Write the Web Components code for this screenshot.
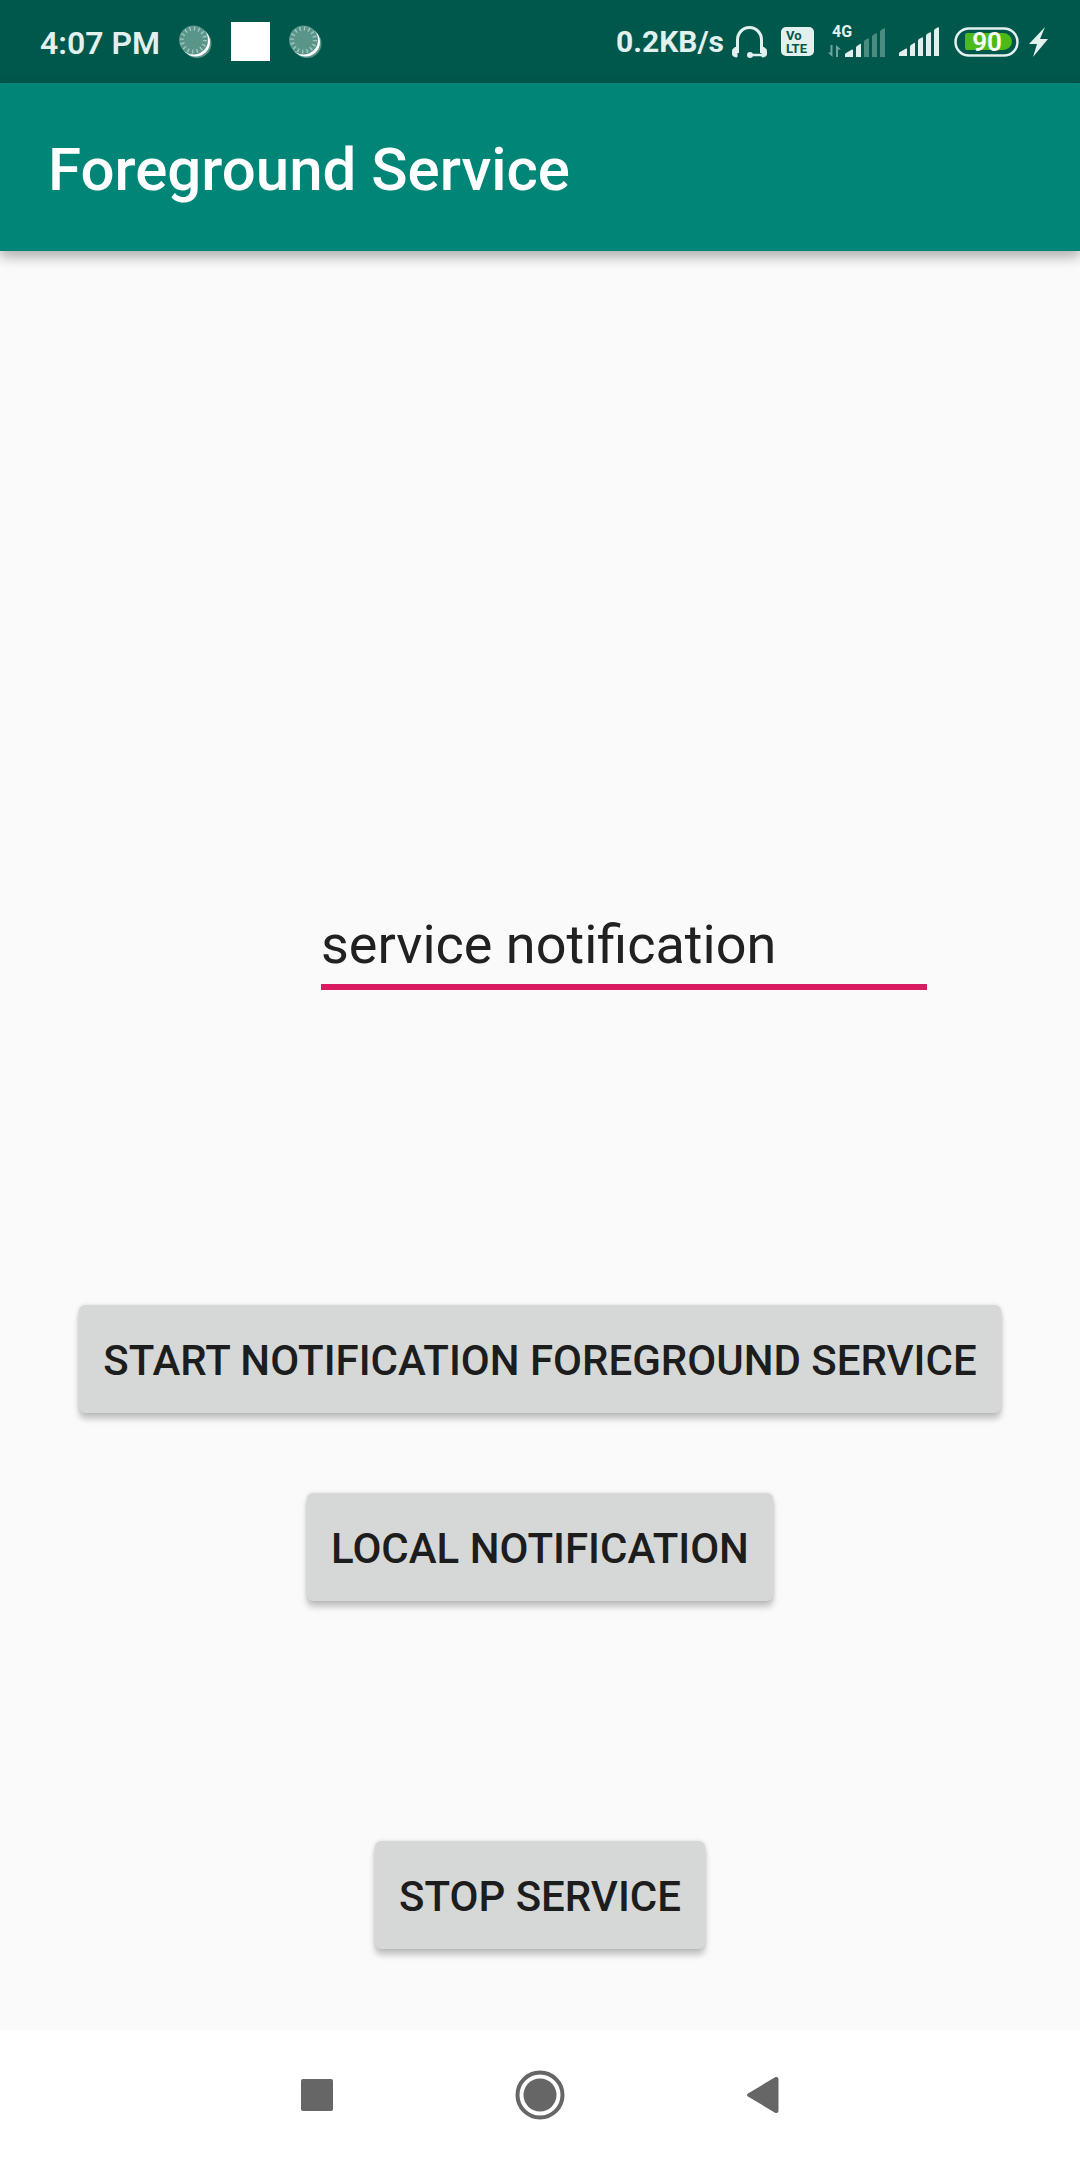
<!DOCTYPE html>
<html lang="en">
<head>
<meta charset="utf-8">
<meta name="viewport" content="width=device-width, initial-scale=1">
<title>Foreground Service</title>
<style>
  body { margin: 0; font-family: Roboto, "Noto Sans", sans-serif; background: #fafafa; }
</style>
</head>
<body>
<phone-screen>
  <status-bar slot="status"></status-bar>
  <app-bar slot="bar">Foreground Service</app-bar>
  <underlined-field label="Notification text" value="service notification"></underlined-field>
  <action-group>
    <action-button>START NOTIFICATION FOREGROUND SERVICE</action-button>
    <action-button>LOCAL NOTIFICATION</action-button>
  </action-group>
  <action-button>STOP SERVICE</action-button>
  <nav-bar slot="nav"></nav-bar>
</phone-screen>

<script>
  const define = (name, html, setup) => {
    const template = document.createElement('template');
    template.innerHTML = html;
    customElements.define(name, class extends HTMLElement {
      constructor() {
        super();
        this.attachShadow({ mode: 'open' }).append(template.content.cloneNode(true));
      }
      connectedCallback() {
        if (setup) setup(this, this.shadowRoot);
      }
    });
  };

  define('phone-screen', `
    <style>
      :host { display: flex; flex-direction: column; min-height: 100vh; }
      main {
        flex: 1; display: flex; flex-direction: column; justify-content: flex-end;
        gap: 240px; padding-bottom: 81px; background: #fafafa;
      }
    </style>
    <slot name="status"></slot>
    <slot name="bar"></slot>
    <main><slot></slot></main>
    <slot name="nav"></slot>`);

  define('sync-icon', `
    <style>:host { display: block; } svg { display: block; }</style>
    <svg width="33" height="34" viewBox="0 0 33 34" aria-hidden="true">
      <circle cx="18" cy="18.500" r="14.500" fill="#5a9589"/>
      <circle cx="16.500" cy="17" r="14.500" fill="#fff"/>
      <circle cx="14.500" cy="15" r="14.500" fill="#5a9589"/>
      <circle cx="14.500" cy="15" r="11.500" fill="none" stroke="#a3c6bf" stroke-width="4" stroke-dasharray="1.400 3.116"/>
    </svg>`);

  define('signal-bars', `
    <style>
      :host { display: block; } svg { display: block; }
      path { fill: #e2f0ee; }
      :host([level="2"]) .high { fill: #4b8c81; }
    </style>
    <svg width="40" height="29" viewBox="0 0 40 29" aria-hidden="true">
      <path d="M0 29V26.500Q0 25.500 1 25L7 21.500Q8 21.200 8 22V29Z"/>
      <path d="M11 29V20Q11 18.500 12 18L15 16Q16 15.500 16 16.500V29Z"/>
      <path class="high" d="M19 29V14Q19 12.500 20 12L23 10.500Q24 10 24 11V29Z"/>
      <path class="high" d="M27 29V9Q27 7.500 28 7L31 5.300Q32 5 32 6V29Z"/>
      <path class="high" d="M35 29V4Q35 2.500 36 2L39 .300Q40 0 40 1V29Z"/>
    </svg>`);

  define('mobile-signal', `
    <style>
      :host { display: flex; align-items: flex-end; gap: 4px; }
      svg { display: block; overflow: visible; }
      text { font-family: Roboto, sans-serif; font-weight: 700; }
    </style>
    <svg width="13" height="31" viewBox="0 0 13 31">
      <text x="4" y="11" font-size="16" fill="#e2f0ee">4G</text>
      <path d="M4.500 19V31L0 26.500H2.500V19ZM8 31V19L13 23.500H10V31Z" fill="#6fa69d"/>
    </svg>
    <signal-bars level="2"></signal-bars>`);

  define('status-bar', `
    <style>
      :host {
        display: flex; justify-content: space-between; align-items: center;
        box-sizing: border-box; height: 83px; padding: 0 32px 0 40px;
        background: #00574b; color: #e2f0ee;
      }
      div { display: flex; align-items: center; }
      svg { display: block; }
      .left { gap: 19px; }
      .right { gap: 14px; }
      .pair { gap: 8px; }
      .time { font-size: 32px; font-weight: 600; line-height: 38px; padding-top: 2px; }
      .speed { font-size: 30px; font-weight: 700; line-height: 36px; }
      .square { width: 39px; height: 39px; background: #fff; }
      text { font-family: Roboto, sans-serif; font-weight: 700; }
    </style>
    <div class="left">
      <span class="time">4:07 PM</span>
      <sync-icon></sync-icon>
      <span class="square"></span>
      <sync-icon></sync-icon>
    </div>
    <div class="right">
      <div class="pair">
        <span class="speed">0.2KB/s</span>
        <svg width="35" height="32" viewBox="0 0 35 32" fill="none" stroke="#e2f0ee" aria-hidden="true">
          <path d="M5.500 27V14a12 12.500 0 0 1 24 0V27" stroke-width="3"/>
          <path d="M5 20V31Q0 31 0 26.500T5 21ZM30 20V31Q35 31 35 26.500T30 21Z" fill="#e2f0ee" stroke="#e2f0ee" stroke-width="1"/>
          <path d="M18 29H31" stroke-width="2.500"/>
          <circle cx="18" cy="29" r="3" fill="#e2f0ee" stroke="none"/>
        </svg>
      </div>
      <svg width="33" height="29" viewBox="0 0 33 29" role="img" aria-label="VoLTE">
        <rect width="33" height="29" rx="5" fill="#e2f0ee"/>
        <text x="5" y="13" font-size="13" fill="#00574b">Vo</text>
        <text x="5" y="26" font-size="13" fill="#00574b">LTE</text>
      </svg>
      <mobile-signal></mobile-signal>
      <signal-bars></signal-bars>
      <div class="pair">
        <svg width="68" height="30" viewBox="-1 0 68 30" role="img" aria-label="Battery 90, charging">
          <rect x="1.500" y="1.500" width="62" height="27" rx="13.500" fill="none" stroke="#e2f0ee" stroke-width="2.500"/>
          <path d="M13 6H49A9 8.500 0 0 1 49 23H13Q11 23 11 21V8Q11 6 13 6Z" fill="#4cbb17"/>
          <text x="33" y="24" font-size="26" style="font-weight: 600" text-anchor="middle" fill="#fff">90</text>
        </svg>
        <svg width="19" height="30" viewBox="0 0 19 30" aria-hidden="true">
          <path d="M16 0L0 17H8L4 30L19 12H11Z" fill="#e2f0ee"/>
        </svg>
      </div>
    </div>`);

  define('app-bar', `
    <style>
      :host {
        display: flex; align-items: center; box-sizing: border-box; height: 168px;
        padding: 6px 48px 0; background: #008577; color: #fff; position: relative;
        box-shadow: 0 6px 12px rgba(0, 0, 0, .3);
      }
      h1 { margin: 0; font-size: 60px; line-height: 70px; font-weight: 500; }
    </style>
    <h1><slot></slot></h1>`);

  define('underlined-field', `
    <style>
      :host { display: block; margin: 0 153px 75px 321px; }
      input {
        display: block; box-sizing: border-box; width: 100%; height: 78px;
        margin: 0; padding: 0 0 8px; border: 0; border-bottom: 6px solid #d81b60;
        border-radius: 0; outline: 0; background: transparent; color: #212121;
        font: 400 54px/64px Roboto, sans-serif;
      }
    </style>
    <input type="text" spellcheck="false">`,
    (host, root) => {
      const input = root.querySelector('input');
      input.value = host.getAttribute('value');
      input.setAttribute('aria-label', host.getAttribute('label'));
    });

  define('action-group', `
    <style>:host { display: flex; flex-direction: column; gap: 80px; }</style>
    <slot></slot>`);

  define('action-button', `
    <style>
      :host { display: flex; justify-content: center; }
      button {
        height: 108px; margin: 0; padding: 4px 24px 0; border: 0; border-radius: 6px;
        background: #d6d8d7; color: #1d1d1d; white-space: nowrap;
        font: 500 42px/50px Roboto, sans-serif;
        box-shadow: 0 6px 6px rgba(0, 0, 0, .22), 0 0 4px rgba(0, 0, 0, .12);
      }
    </style>
    <button type="button"><slot></slot></button>`);

  define('nav-bar', `
    <style>
      :host { display: block; background: #fff; }
      nav { display: flex; justify-content: center; align-items: center; gap: 125px; height: 130px; }
      button { display: block; width: 98px; height: 98px; padding: 0; border: 0; background: none; }
      svg { display: block; margin: auto; fill: #666; }
    </style>
    <nav aria-label="System">
      <button type="button" aria-label="Recent apps">
        <svg width="32" height="32" viewBox="0 0 32 32"><rect width="32" height="32" rx="2"/></svg>
      </button>
      <button type="button" aria-label="Home">
        <svg width="50" height="50" viewBox="0 0 50 50">
          <circle cx="25" cy="25" r="22.500" fill="none" stroke="#666" stroke-width="4"/>
          <circle cx="25" cy="25" r="16.500"/>
        </svg>
      </button>
      <button type="button" aria-label="Back">
        <svg width="32" height="38" viewBox="0 0 32 38">
          <path d="M1 17.500L28 1.300Q31 0 31.500 3V35Q31 38 28 36.700L1 20.500Q-1 19 1 17.500Z"/>
        </svg>
      </button>
    </nav>`);
</script>
</body>
</html>
